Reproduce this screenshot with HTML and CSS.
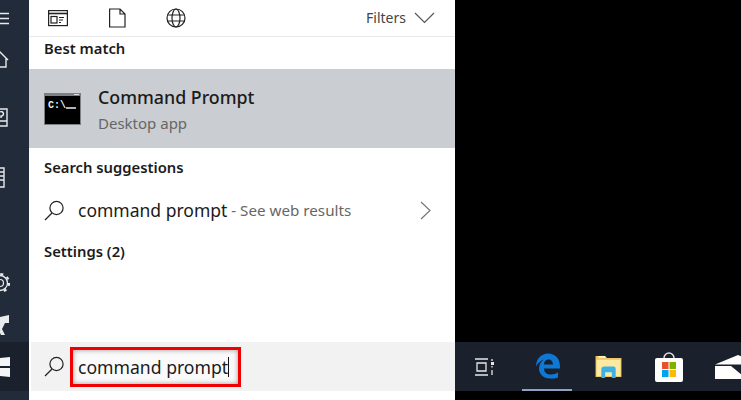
FILE: index.html
```html
<!DOCTYPE html>
<html lang="en">

<head>
    <meta charset="UTF-8">
    <title>Command Prompt search</title>
    <link rel="stylesheet" href="styles.css">
</head>

<body>
    <div class="rail">
        <svg width="29" height="400" viewBox="0 0 29 400" fill="none" stroke="#e8eaec" stroke-width="1.4">
            <rect y="342" width="29" height="49" fill="#1a212d" stroke="none"/>
            <path d="M0 13.5H9M0 18.5H9M0 23.5H9"/>
            <path d="M-4 60L0 52L8 60M6 58V67H-2"/>
            <path d="M-2 109H7V126H-2M-2 121H7"/>
            <path d="M0 112a2.2 2.2 0 1 1 1 4v2"/>
            <path d="M-2 168H4V187H-2M0 172H4M0 176H4M0 180H4"/>
            <circle cx="0" cy="283" r="3.5" stroke-width="1.2"/>
            <circle cx="0" cy="283" r="7.5" stroke-width="1.3"/>
            <circle cx="0" cy="283" r="9" stroke-width="2.2" stroke-dasharray="3 4.07"/>
            <path d="M0 317L9 315V323H5L2 329L5 335H1L-2 329V317Z" fill="#e8eaec" stroke="none"/>
            <path d="M0 358L10 357V366H0ZM0 368H10V377L0 376Z" fill="#f4f5f6" stroke="none"/>
        </svg>
    </div>

    <div class="panel">
        <div class="tabs">
            <svg class="tab-icon" width="20" height="18" viewBox="0 0 20 18" fill="none" stroke="#222" stroke-width="1.2">
                <rect x="0.6" y="1.6" width="18.8" height="15"/>
                <path d="M1 4.5H19" stroke-width="1.6"/>
                <rect x="3" y="7.5" width="6" height="6.5"/>
                <path d="M11 8.5H16M11 11H15M11 13.5H13"/>
            </svg>
            <svg class="tab-icon" width="18" height="20" viewBox="0 0 18 20" fill="none" stroke="#222" stroke-width="1.2">
                <path d="M1.6 1V19H17V6L12 1ZM12 1V6H17"/>
            </svg>
            <svg class="tab-icon" width="20" height="20" viewBox="0 0 20 20" fill="none" stroke="#222" stroke-width="1.2">
                <circle cx="10" cy="10" r="9"/>
                <ellipse cx="10" cy="10" rx="4" ry="9"/>
                <path d="M1.6 7H18.4M1.6 13H18.4"/>
            </svg>
            <div class="filters">
                <span>Filters</span>
                <svg width="21" height="12" viewBox="0 0 21 12" fill="none" stroke="#555" stroke-width="1.2">
                    <path d="M1 1L10.5 10.5L20 1"/>
                </svg>
            </div>
        </div>

        <h2 class="best-heading">Best match</h2>

        <div class="best-row">
            <svg class="cmd-icon" width="37" height="32" viewBox="0 0 37 32">
                <rect x="0" y="0" width="37" height="32" fill="#7d7f82"/>
                <rect x="1" y="3" width="35" height="28" fill="#000"/>
                <rect x="30" y="1" width="5" height="1" fill="#ddd"/>
                <path d="M22 15H32" stroke="#eee" stroke-width="1.5"/>
                <text x="4" y="15" class="cmd-text">C:\</text>
            </svg>
            <div class="best-text">
                <div class="best-title">Command Prompt</div>
                <div class="best-sub">Desktop app</div>
            </div>
        </div>

        <h2 class="section-heading">Search suggestions</h2>

        <div class="suggestion">
            <svg class="search-icon" width="21" height="21" viewBox="0 0 21 21" fill="none" stroke="#222" stroke-width="1.2">
                <circle cx="12.5" cy="8" r="6.6"/>
                <path d="M8 13L1 20"/>
            </svg>
            <span class="query">command prompt</span>
            <span class="web-hint">&nbsp;- See web results</span>
            <svg class="chevron" width="11" height="19" viewBox="0 0 11 19" fill="none" stroke="#777" stroke-width="1.2">
                <path d="M1 1L10 9.5L1 18"/>
            </svg>
        </div>

        <h2 class="section-heading settings">Settings (2)</h2>

        <div class="search-bar">
            <svg class="search-icon" width="21" height="21" viewBox="0 0 21 21" fill="none" stroke="#222" stroke-width="1.2">
                <circle cx="12.5" cy="8" r="6.6"/>
                <path d="M8 13L1 20"/>
            </svg>
            <div class="search-box">command prompt</div>
        </div>
    </div>

    <div class="desktop">
        <div class="taskbar">
            <div class="task task-view">
                <svg width="21" height="18" viewBox="0 0 21 18" fill="none" stroke="#e6e6e6" stroke-width="1.3">
                    <path d="M1 1H14M1 17H14M3 5H12V13H3ZM18 1V3M18 8V9.5M18 12V17"/>
                    <rect x="17" y="4" width="3" height="3" fill="#e6e6e6" stroke="none"/>
                </svg>
            </div>
            <div class="task task-active">
                <svg width="25" height="26" viewBox="0 0 25 25">
                    <path fill="#0c78d8" d="M1 13C1 5 7 0 13 0C20 0 25 5 25 13V15H9C9 19 12 21 16 21C19 21 21 20 23 19V24C21 25 18 25 15 25C8 25 4 20 4 15C4 11 6 8 9 6C6 7 3 9 1 13ZM9 11H18C18 8 16 6 14 6C11 6 9 8 9 11Z"/>
                </svg>
            </div>
            <div class="task">
                <svg width="27" height="23" viewBox="0 0 27 24">
                    <path fill="#f0c65e" d="M0 1H10L12 3H27V23H0Z"/>
                    <path fill="#fbe9a4" d="M1 5H26V22H1Z"/>
                    <path fill="#fff4c8" d="M3 1H10V3H3Z"/>
                    <path fill="#3cb1e8" d="M6 15Q6 12 9 12H19Q21 12 21 15V24H17V18H10V24H6Z"/>
                </svg>
            </div>
            <div class="task">
                <svg width="30" height="30" viewBox="0 0 30 30">
                    <path fill="none" stroke="#ddd" stroke-width="1.5" d="M10 8V6A5 5 0 0 1 20 6V8"/>
                    <rect x="1" y="6" width="28" height="24" rx="2" fill="#fff"/>
                    <rect x="8" y="10" width="6.5" height="7" fill="#e8502a"/>
                    <rect x="15.5" y="10" width="6.5" height="7" fill="#7cb400"/>
                    <rect x="8" y="18" width="6.5" height="7" fill="#00a3ee"/>
                    <rect x="15.5" y="18" width="6.5" height="7" fill="#ffb900"/>
                </svg>
            </div>
            <div class="task">
                <svg width="30" height="24" viewBox="0 0 30 24">
                    <path fill="#fff" d="M0 9.5L23 0L30 3V9.5Z"/>
                    <path fill="#fff" d="M0 11H30V24H0Z"/>
                    <path fill="#1a212d" d="M16 11H30V14L27 20Z"/>
                </svg>
            </div>
        </div>
    </div>
</body>

</html>
```

FILE: styles.css
```css
* {
    margin: 0;
    padding: 0;
    box-sizing: border-box;
}

body {
    display: flex;
    height: 400px;
    overflow: hidden;
    background: #000;
    font-family: "Noto Sans", "Open Sans", sans-serif;
    color: #1b1b1b;
}

.rail {
    width: 29px;
    flex-shrink: 0;
    background: #212b3a;
    overflow: hidden;
}

.rail svg {
    display: block;
}

.panel {
    width: 426px;
    flex-shrink: 0;
    display: flex;
    flex-direction: column;
    background: #fff;
    padding-bottom: 9px;
}

.tabs {
    height: 37px;
    display: flex;
    align-items: center;
    padding: 0 20px 0 19px;
    border-bottom: 1px solid #e8e8e8;
}

.tab-icon {
    margin-right: 40px;
}

.filters {
    margin-left: auto;
    display: flex;
    align-items: center;
    gap: 8px;
    padding-bottom: 1px;
    font-size: 14px;
    color: #444;
}

.best-heading,
.section-heading {
    font-size: 14.8px;
    font-weight: 600;
    line-height: 20px;
    padding-left: 15px;
}

.best-heading {
    margin-top: 1px;
    height: 31px;
}

.best-row {
    height: 79px;
    display: flex;
    align-items: center;
    gap: 17px;
    padding: 0 15px;
    background: #cacdd1;
}

.cmd-text {
    font: bold 10px "Liberation Mono", monospace;
    fill: #eee;
}

.best-text {
    padding-top: 1px;
}

.best-title {
    font-size: 17.8px;
    font-weight: 500;
    line-height: 24px;
}

.best-sub {
    margin-top: 3px;
    font-size: 15px;
    line-height: 22px;
    color: #666;
}

.section-heading {
    margin-top: 9px;
}

.suggestion {
    display: flex;
    align-items: center;
    height: 44px;
    margin-top: 11px;
    padding: 0 24px 0 15px;
}

.query {
    margin-left: 13px;
    font-size: 17.5px;
}

.web-hint {
    font-size: 15.2px;
    color: #666;
}

.chevron {
    margin-left: auto;
}

.search-bar {
    margin-top: auto;
    height: 49px;
    display: flex;
    align-items: center;
    gap: 5px;
    margin-left: 2px;
    padding-left: 13px;
    background: #f2f2f2;
}

.search-box {
    width: 171px;
    height: 40px;
    display: flex;
    align-items: center;
    padding-left: 5px;
    border: 3px solid #f00000;
    font-size: 17.6px;
    box-shadow: inset 0 0 5px rgba(0, 0, 0, 0.4);
    background: #fafafa;
}

.search-box::after {
    content: "";
    width: 1px;
    height: 20px;
    background: #111;
}

.desktop {
    flex: 1;
    min-width: 0;
    padding-top: 342px;
    overflow: hidden;
}

.taskbar {
    height: 49px;
    display: flex;
    align-items: center;
    gap: 11px;
    padding-left: 6px;
    background: #1a212d;
}

.task {
    width: 50px;
    height: 49px;
    flex-shrink: 0;
    display: flex;
    align-items: center;
    justify-content: center;
}

.task-view svg {
    margin-right: 3px;
}

.task-active {
    border-bottom: 2px solid #8fa3c0;
}
```
